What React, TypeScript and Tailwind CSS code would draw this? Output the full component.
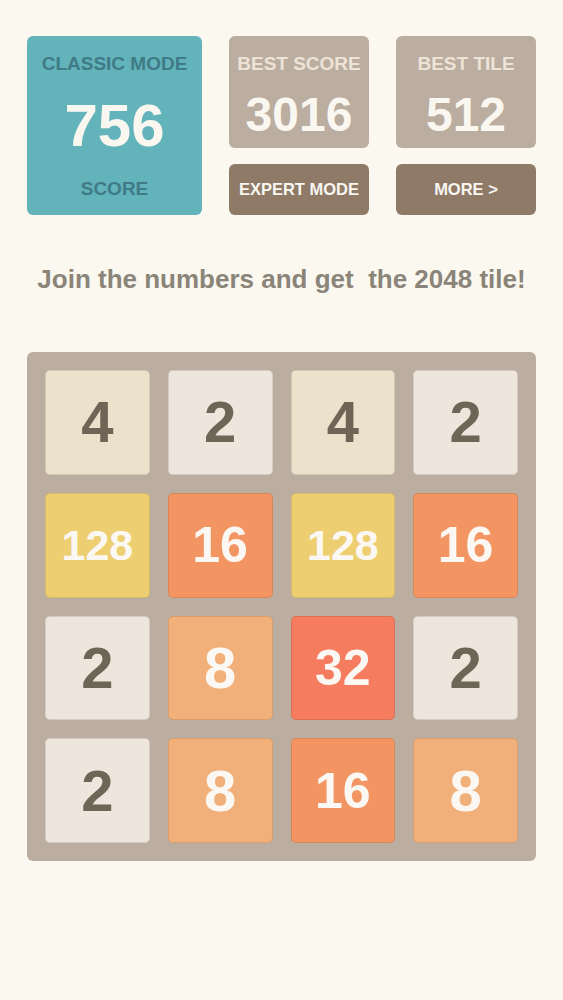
const board: number[][] = [
  [4, 2, 4, 2],
  [128, 16, 128, 16],
  [2, 8, 32, 2],
  [2, 8, 16, 8],
];

const tileStyles: Record<number, string> = {
  2: 'bg-[#eee5dc] text-[#6f6557]',
  4: 'bg-[#ece1cb] text-[#6f6557]',
  8: 'bg-[#f1b07a] text-[#fbf8f3]',
  16: 'bg-[#f39563] text-[#fbf8f3]',
  32: 'bg-[#f57c5f] text-[#fbf8f3]',
  128: 'bg-[#edcf72] text-[#fbf8f3]',
};

function Tile({ value }: { value: number }) {
  const digits = String(value).length;
  const size = digits >= 3 ? 'text-[43px]' : digits === 2 ? 'text-[50px]' : 'text-[58px]';
  return (
    <div
      className={`aspect-square rounded-[5px] border border-black/10 flex items-center justify-center font-bold leading-none ${tileStyles[value]} ${size}`}
    >
      {value}
    </div>
  );
}

export default function App() {
  return (
    <div
      className="min-h-[1000px] bg-[#fbf8f0] px-[27px] pt-[36px]"
      style={{ fontFamily: '"Liberation Sans", Arial, sans-serif' }}
    >
      {/* Scores */}
      <div className="flex justify-between">
        <div className="w-[175px] h-[179px] rounded-[6px] bg-[#63b3bb] flex flex-col items-center pt-[16px] font-bold">
          <div className="text-[19px] leading-[24px] text-[#3f7b86]">CLASSIC MODE</div>
          <div className="mt-[20px] text-[60px] leading-[60px] text-[#faf6f0]">756</div>
          <div className="mt-[21px] text-[19px] leading-[24px] text-[#3f7b86]">SCORE</div>
        </div>

        <div className="w-[140px] flex flex-col gap-[16px]">
          <div className="h-[112px] rounded-[6px] bg-[#bbada0] flex flex-col items-center pt-[16px] font-bold">
            <div className="text-[19px] leading-[24px] text-[#ede3d6]">BEST SCORE</div>
            <div className="mt-[15px] text-[48px] leading-[48px] text-[#faf6f0]">3016</div>
          </div>
          <button className="h-[51px] rounded-[6px] bg-[#8e7a67] text-[#f9f6f2] font-bold text-[16.5px] leading-none">
            EXPERT MODE
          </button>
        </div>

        <div className="w-[140px] flex flex-col gap-[16px]">
          <div className="h-[112px] rounded-[6px] bg-[#bbada0] flex flex-col items-center pt-[16px] font-bold">
            <div className="text-[19px] leading-[24px] text-[#ede3d6]">BEST TILE</div>
            <div className="mt-[15px] text-[48px] leading-[48px] text-[#faf6f0]">512</div>
          </div>
          <button className="h-[51px] rounded-[6px] bg-[#8e7a67] text-[#f9f6f2] font-bold text-[16.5px] leading-none">
            MORE &gt;
          </button>
        </div>
      </div>

      <p className="mt-[49px] text-center whitespace-pre text-[26px] leading-[30px] font-bold text-[#8a8479]">
        {'Join the numbers and get  the 2048 tile!'}
      </p>

      {/* Board */}
      <div className="mt-[58px] rounded-[6px] bg-[#bbada0] p-[18px] grid grid-cols-4 gap-[18px]">
        {board.flat().map((v, i) => (
          <Tile key={i} value={v} />
        ))}
      </div>
    </div>
  );
}
